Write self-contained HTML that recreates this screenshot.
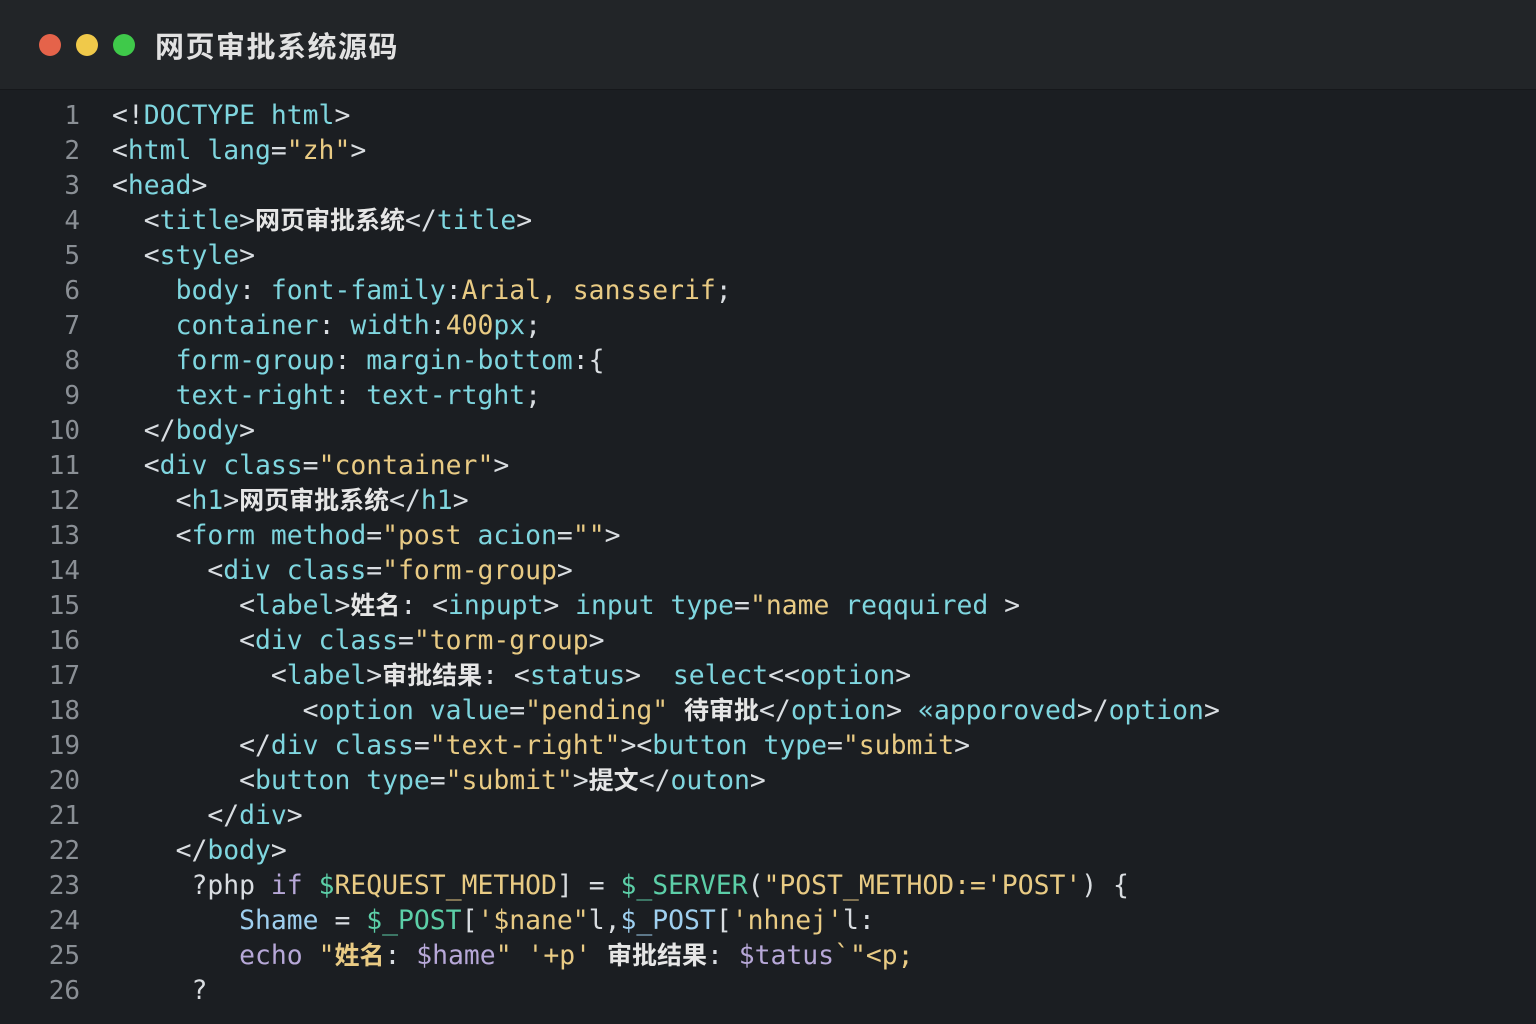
<!DOCTYPE html>
<html><head><meta charset="utf-8"><style>
body{margin:0;width:1536px;height:1024px;background:#1b1e22;overflow:hidden;font-family:"DejaVu Sans Mono","Liberation Mono","Noto Sans CJK SC",monospace;}
.hdr{position:absolute;left:0;top:0;width:1536px;height:89px;background:#222528;border-bottom:1px solid #16181b}
.dot{position:absolute;top:34px;width:22px;height:22px;border-radius:50%}
.title{position:absolute;left:155px;top:24px;font:bold 29px "Noto Sans CJK SC",sans-serif;color:#e2e2e2;letter-spacing:1.5px}
.code{position:absolute;left:0;top:98px;font-size:26.4px;line-height:35px;color:#d6dbe0;white-space:pre}
.ln{position:absolute;left:0;top:99px;width:80px;text-align:right;color:#8a8f95;font-size:26px;line-height:35px}
.c{color:#7fd6df}.y{color:#e9cb84}.w{color:#d9dde1}.g{color:#5ccfa8}.p{color:#b7a8d8}.b{color:#9fd0f0}
.z{font-family:"Noto Sans CJK SC",sans-serif;color:#e6e6e6;font-size:25px;line-height:10px;font-weight:bold}
</style></head><body>
<div class="hdr">
<div class="dot" style="left:39px;background:#e5634a"></div>
<div class="dot" style="left:76px;background:#f0c94a"></div>
<div class="dot" style="left:113px;background:#3fc94a"></div>
<div class="title">网页审批系统源码</div>
</div>
<div class="ln">1<br>2<br>3<br>4<br>5<br>6<br>7<br>8<br>9<br>10<br>11<br>12<br>13<br>14<br>15<br>16<br>17<br>18<br>19<br>20<br>21<br>22<br>23<br>24<br>25<br>26</div>
<div class="code" style="left:112px"><span class="w">&lt;!</span><span class="c">DOCTYPE html</span><span class="w">&gt;</span>
<span class="w">&lt;</span><span class="c">html lang</span><span class="w">=</span><span class="y">"zh"</span><span class="w">&gt;</span>
<span class="w">&lt;</span><span class="c">head</span><span class="w">&gt;</span>
  <span class="w">&lt;</span><span class="c">title</span><span class="w">&gt;</span><span class="z">网页审批系统</span><span class="w">&lt;/</span><span class="c">title</span><span class="w">&gt;</span>
  <span class="w">&lt;</span><span class="c">style</span><span class="w">&gt;</span>
    <span class="c">body</span><span class="w">: </span><span class="c">font-family</span><span class="w">:</span><span class="y">Arial, sansserif</span><span class="w">;</span>
    <span class="c">container</span><span class="w">: </span><span class="c">width</span><span class="w">:</span><span class="y">400</span><span class="c">px</span><span class="w">;</span>
    <span class="c">form-group</span><span class="w">: </span><span class="c">margin-bottom</span><span class="w">:{</span>
    <span class="c">text-right</span><span class="w">: </span><span class="c">text-rtght</span><span class="w">;</span>
  <span class="w">&lt;/</span><span class="c">body</span><span class="w">&gt;</span>
  <span class="w">&lt;</span><span class="c">div class</span><span class="w">=</span><span class="y">"container"</span><span class="w">&gt;</span>
    <span class="w">&lt;</span><span class="c">h1</span><span class="w">&gt;</span><span class="z">网页审批系统</span><span class="w">&lt;/</span><span class="c">h1</span><span class="w">&gt;</span>
    <span class="w">&lt;</span><span class="c">form method</span><span class="w">=</span><span class="y">"post</span> <span class="c">acion</span><span class="w">=</span><span class="y">""</span><span class="w">&gt;</span>
      <span class="w">&lt;</span><span class="c">div class</span><span class="w">=</span><span class="y">"form-group</span><span class="w">&gt;</span>
        <span class="w">&lt;</span><span class="c">label</span><span class="w">&gt;</span><span class="z">姓名</span><span class="w">: &lt;</span><span class="c">inpupt</span><span class="w">&gt; </span><span class="c">input type</span><span class="w">=</span><span class="y">"name</span> <span class="c">reqquired</span><span class="w"> &gt;</span>
        <span class="w">&lt;</span><span class="c">div class</span><span class="w">=</span><span class="y">"torm-group</span><span class="w">&gt;</span>
          <span class="w">&lt;</span><span class="c">label</span><span class="w">&gt;</span><span class="z">审批结果</span><span class="w">: &lt;</span><span class="c">status</span><span class="w">&gt;  </span><span class="c">select</span><span class="w">&lt;&lt;</span><span class="c">option</span><span class="w">&gt;</span>
            <span class="w">&lt;</span><span class="c">option value</span><span class="w">=</span><span class="y">"pending"</span> <span class="z">待审批</span><span class="w">&lt;/</span><span class="c">option</span><span class="w">&gt; </span><span class="c">«apporoved</span><span class="w">&gt;/</span><span class="c">option</span><span class="w">&gt;</span>
        <span class="w">&lt;/</span><span class="c">div class</span><span class="w">=</span><span class="y">"text-right"</span><span class="w">&gt;&lt;</span><span class="c">button type</span><span class="w">=</span><span class="y">"submit</span><span class="w">&gt;</span>
        <span class="w">&lt;</span><span class="c">button type</span><span class="w">=</span><span class="y">"submit"</span><span class="w">&gt;</span><span class="z">提文</span><span class="w">&lt;/</span><span class="c">outon</span><span class="w">&gt;</span>
      <span class="w">&lt;/</span><span class="c">div</span><span class="w">&gt;</span>
    <span class="w">&lt;/</span><span class="c">body</span><span class="w">&gt;</span>
     <span class="w">?</span><span class="w">php </span><span class="p">if </span><span class="g">$</span><span class="y">REQUEST_METHOD</span><span class="w">] = </span><span class="g">$_SERVER</span><span class="w">(</span><span class="y">"POST_METHOD:='POST'</span><span class="w">) {</span>
        <span class="b">Shame</span><span class="w"> = </span><span class="g">$_POST</span><span class="w">[</span><span class="y">'$nane"</span><span class="w">l,</span><span class="b">$_POST</span><span class="w">[</span><span class="y">'nhnej'</span><span class="w">l:</span>
        <span class="p">echo </span><span class="y">"</span><span class="z" style="color:#e9cb84">姓名</span><span class="w">: </span><span class="p">$hame</span><span class="y">" '+p' </span><span class="z">审批结果</span><span class="w">: </span><span class="p">$tatus</span><span class="y">`"&lt;p;</span>
     <span class="w">?</span></div>
</body></html>
